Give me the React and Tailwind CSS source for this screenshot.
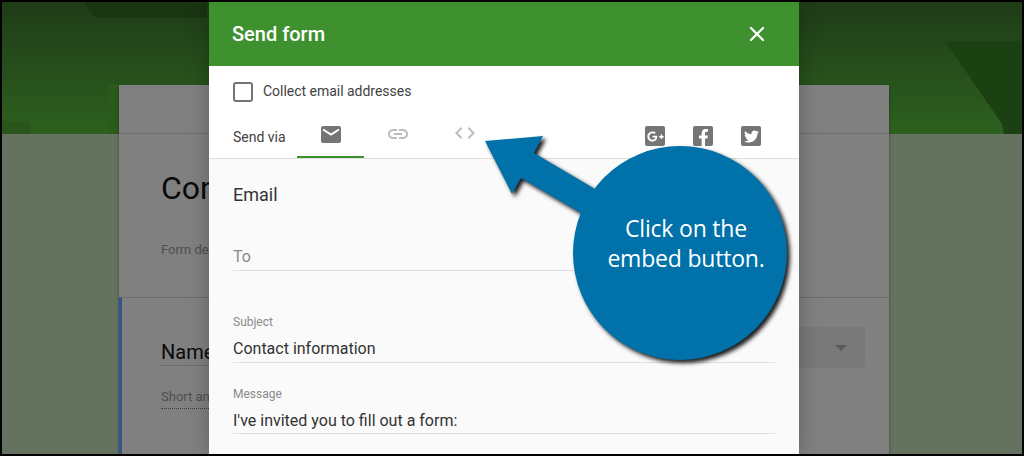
import React from 'react';
import { X } from 'lucide-react';
import { FaFacebookF, FaTwitter, FaGooglePlusG } from 'react-icons/fa';

const roboto = "font-['Roboto',sans-serif]";

// --- form page dimmed behind the dialog ---
const BackgroundPage = () => (
  <div className="h-full flex flex-col">
    <div className="relative h-[132px] shrink-0 bg-gradient-to-b from-[#1f3c17] to-[#2d611f]">
      <svg className="absolute inset-0" width="1020" height="132" viewBox="0 0 1020 132">
        <path d="M83 0h122v16H98q-8 0-15-16z" fill="#1a3512" />
        <path d="M0 132v-13h22q6 0 6 6v7z" fill="#28561b" />
        <path d="M106 132V88q0-6 6-6h86v50z" fill="#2a5b1d" />
        <path d="M943 39h77v93h-18l-2-10z" fill="#1b4011" />
      </svg>
    </div>
    <div className="relative -mt-[49px] ml-[117px] w-[770px] shadow-[0_1px_3px_rgba(0,0,0,0.35)]">
      <div className="h-[212px] bg-[#808080]">
        <div className="h-[49px] border-b border-[#6f6f6f]" />
        <div className={`${roboto} ml-[42px] mt-[32px] w-[48px] overflow-hidden whitespace-nowrap text-[32px] leading-[44px] text-[#0a0a0a]`}>Contact form</div>
        <div className={`${roboto} ml-[42px] mt-[31px] w-[48px] overflow-hidden whitespace-nowrap text-[13px] leading-[18px] text-[#4f4f4f]`}>Form description</div>
      </div>
      <div className="h-[160px] bg-[#808080] border-t border-[#6a6a6a] border-l-[3px] border-l-[#2f5590] pl-[39px] pt-[29px] flex justify-between">
        <div className="w-[300px]">
          <div className={`${roboto} h-[39px] border-b border-[#6b6b6b] text-[20px] leading-[50px] text-[#0a0a0a]`}>
            <div className="w-[48px] overflow-hidden whitespace-nowrap">Name</div>
          </div>
          <div className={`${roboto} mt-[22px] pb-[2px] border-b border-dotted border-[#3c3c3c] text-[13px] leading-[18px] text-[#4f4f4f]`}>
            <div className="w-[48px] overflow-hidden whitespace-nowrap">Short answer text</div>
          </div>
        </div>
        <div className="w-[300px] h-[41px] mr-[24px] rounded-[2px] bg-[#797979] flex items-center justify-end pr-[18px]">
          <div className="w-0 h-0 border-x-[6px] border-x-transparent border-t-[6px] border-t-[#5a5a5a]" />
        </div>
      </div>
    </div>
  </div>
);

const MailIcon = () => (
  <svg width="20" height="17" viewBox="0 0 20 17">
    <rect width="20" height="17" rx="2" fill="#757575" />
    <path d="M2 3.5l8 5 8-5" fill="none" stroke="#fff" strokeWidth="2" />
  </svg>
);

const LinkIcon = () => (
  <svg width="24" height="24" viewBox="0 0 24 24" fill="#bdbdbd">
    <path d="M3.9 12c0-1.71 1.39-3.1 3.1-3.1h4V7H7c-2.76 0-5 2.24-5 5s2.24 5 5 5h4v-1.9H7c-1.71 0-3.1-1.39-3.1-3.1zM8 13h8v-2H8v2zm9-6h-4v1.9h4c1.71 0 3.1 1.39 3.1 3.1s-1.39 3.1-3.1 3.1h-4V17h4c2.76 0 5-2.24 5-5s-2.24-5-5-5z" />
  </svg>
);

const CodeIcon = () => (
  <svg width="24" height="24" viewBox="0 0 24 24" fill="#bdbdbd">
    <path d="M9.4 16.6L4.8 12l4.6-4.6L8 6l-6 6 6 6 1.4-1.4zm5.2 0l4.6-4.6-4.6-4.6L16 6l6 6-6 6-1.4-1.4z" />
  </svg>
);

const SocialBox = ({ children }) => (
  <div className="w-5 h-5 rounded-[2px] bg-[#757575] flex items-center justify-center overflow-hidden text-white">{children}</div>
);

const Field = ({ label, value, className }) => (
  <div className={`border-b border-[#e0e0e0] ${className}`}>
    <div className="text-[12px] leading-[16px] text-[#8a8a8a]">{label}</div>
    <div className="mt-[9px] text-[16px] leading-[20px] text-[#333333]">{value}</div>
  </div>
);

const SendDialog = () => (
  <div className={`${roboto} absolute top-0 bottom-0 left-[207px] w-[590px] flex flex-col shadow-[0_0_20px_rgba(0,0,0,0.25)]`}>
    <div className="h-16 shrink-0 bg-[#3f912f] px-6 flex items-center justify-between">
      <span className="text-[20px] font-medium text-white -ml-px">Send form</span>
      <X size={24} strokeWidth={2.2} className="text-white mr-[6px]" />
    </div>

    <div className="h-[93px] shrink-0 bg-white border-b border-[#e0e0e0] px-6 pt-4">
      <div className="flex items-center gap-2.5">
        <div className="w-5 h-5 rounded-[3px] border-2 border-[#757575]" />
        <span className="-mt-[2px] text-[14px] text-[#424242] tracking-[-0.02px]">Collect email addresses</span>
      </div>
      <div className="mt-[14px] flex items-start">
        <span className="mt-[11px] text-[14px] leading-[20px] text-[#424242]">Send via</span>
        <div className="ml-[11px] w-[67px] h-[42px] border-b-2 border-[#3f912f] flex justify-center pl-px pt-[10px]">
          <MailIcon />
        </div>
        <div className="w-[68px] flex justify-center pt-[6px]"><LinkIcon /></div>
        <div className="w-[67px] flex justify-center pt-[5px]"><CodeIcon /></div>
        <div className="ml-auto mt-[10px] mr-3.5 flex gap-7">
          <SocialBox><FaGooglePlusG size={17} /></SocialBox>
          <SocialBox><FaFacebookF size={17} className="mt-[3px]" /></SocialBox>
          <SocialBox><FaTwitter size={15} /></SocialBox>
        </div>
      </div>
    </div>

    <div className="flex-1 bg-[#fafafa] px-6">
      <div className="pt-[26px] text-[18px] leading-[20px] text-[#333333]">Email</div>
      <div className="mt-[40px] h-[26px] border-b border-[#e0e0e0] pt-[2px] text-[16px] leading-[20px] text-[#8a8a8a]">To</div>
      <Field label="Subject" value="Contact information" className="mt-[43px] pb-[3px]" />
      <Field label="Message" value="I've invited you to fill out a form:" className="mt-[23px] pb-[2px]" />
    </div>
  </div>
);

// --- blue arrow + circle annotation ---
const Callout = () => (
  <div className="absolute left-[478px] top-[134px] w-[320px] h-[235px]">
    <svg width="320" height="235" viewBox="0 0 320 235" className="absolute inset-0 drop-shadow-[3px_3px_2px_rgba(0,0,0,0.9)]">
      <path d="M5 5L63 0L54 17L115 53L101 77L41 42L32 58z" fill="#0071a9" />
      <circle cx="200" cy="117" r="107" fill="#0071a9" />
    </svg>
    <div className="absolute left-[99px] top-[77px] w-[214px] text-center font-['Open_Sans',sans-serif] text-[23px] leading-[30px] tracking-[-0.2px] text-white">
      Click on the<br />embed button.
    </div>
  </div>
);

export default function App() {
  return (
    <div className="relative w-[1024px] h-[456px] overflow-hidden border-2 border-black bg-[#667260]">
      <BackgroundPage />
      <SendDialog />
      <Callout />
    </div>
  );
}
